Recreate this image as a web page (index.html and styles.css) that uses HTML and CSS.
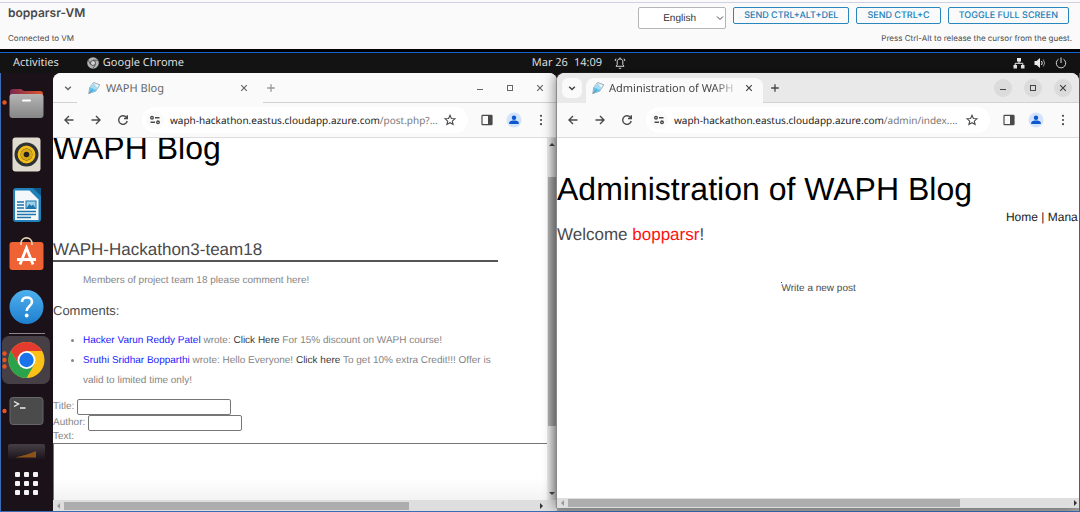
FILE: index.html
```html
<!DOCTYPE html>
<html lang="en">
<head>
<meta charset="utf-8">
<title>bopparsr-VM</title>
<link rel="stylesheet" href="styles.css">
</head>
<body>
<svg class="defs" aria-hidden="true">
  <defs>
    <linearGradient id="folder-back"><stop offset="0" stop-color="#7a2850"/><stop offset="1" stop-color="#e2562b"/></linearGradient>
    <linearGradient id="folder-front" x2="0" y2="1"><stop offset="0" stop-color="#b5b5b5"/><stop offset="1" stop-color="#868686"/></linearGradient>
    <linearGradient id="help-fill" x2="0" y2="1"><stop offset="0" stop-color="#4fb0ee"/><stop offset="1" stop-color="#1e7fcf"/></linearGradient>
    <linearGradient id="tile-fade" x2="0" y2="1"><stop offset="0" stop-color="#453f45"/><stop offset="1" stop-color="#1b1119"/></linearGradient>
  </defs>
  <symbol id="i-down" viewBox="0 0 10 10"><path d="M2.200 3.800l2.800 2.700L7.800 3.800" fill="none" stroke="currentColor" stroke-width="1.500"/></symbol>
  <symbol id="i-x" viewBox="0 0 10 10"><path d="M2.200 2.200l5.600 5.600M7.800 2.200L2.200 7.800" fill="none" stroke="currentColor" stroke-width="1.200"/></symbol>
  <symbol id="i-min" viewBox="0 0 10 10"><path d="M2 6.500h6" stroke="currentColor"/></symbol>
  <symbol id="i-max" viewBox="0 0 10 10"><rect x="2.500" y="2.500" width="5" height="5" fill="none" stroke="currentColor"/></symbol>
  <symbol id="i-plus" viewBox="0 0 10 10"><path d="M5 1.200v7.600M1.200 5h7.600" stroke="currentColor" stroke-width="1.300"/></symbol>
  <symbol id="i-back" viewBox="0 0 12 12"><path d="M10.500 6H2M6 2L2 6l4 4" fill="none" stroke="currentColor" stroke-width="1.400"/></symbol>
  <symbol id="i-fwd" viewBox="0 0 12 12"><path d="M1.500 6H10M6 2l4 4-4 4" fill="none" stroke="currentColor" stroke-width="1.400"/></symbol>
  <symbol id="i-reload" viewBox="0 0 12 12"><path d="M10.200 7A4.300 4.300 0 1 1 9.300 3.300L10 4.200M10.300 1.200v3.300H7" fill="none" stroke="currentColor" stroke-width="1.400"/></symbol>
  <symbol id="i-tune" viewBox="0 0 12 12"><g fill="none" stroke="currentColor" stroke-width="1.400"><circle cx="3" cy="3.700" r="1.300"/><path d="M6 3.700h4.500M1.500 8.300H6"/><circle cx="9" cy="8.300" r="1.300"/></g></symbol>
  <symbol id="i-star" viewBox="0 0 12 12"><path d="M6 1.300l1.400 3.200 3.500.3-2.600 2.300.8 3.400L6 8.700l-3.100 1.800.8-3.400L1.100 4.800l3.500-.3z" fill="none" stroke="currentColor" stroke-width="1.100"/></symbol>
  <symbol id="i-panel" viewBox="0 0 12 12"><rect x="1" y="1.300" width="10" height="9.400" rx=".6" fill="none" stroke="currentColor" stroke-width="1.200"/><path d="M7 1h4v10H7z" fill="currentColor"/></symbol>
  <symbol id="i-user" viewBox="0 0 16 16"><circle cx="8" cy="8" r="7.500" fill="#d3e3fd"/><circle cx="8" cy="5.700" r="2.200" fill="#0b57d0"/><path d="M3.200 12V11c0-1.900 3-2.400 4.800-2.400s4.800.5 4.800 2.400v1z" fill="#0b57d0"/></symbol>
  <symbol id="i-dots" viewBox="0 0 12 12"><g fill="currentColor"><circle cx="6" cy="1.800" r="1.100"/><circle cx="6" cy="6" r="1.100"/><circle cx="6" cy="10.200" r="1.100"/></g></symbol>
  <symbol id="i-pen" viewBox="0 0 14 14"><path d="M6.500 1.500l6.300 2.300-4 6.200L1.800 12.500l.9-6z" fill="#eef6fa" stroke="#8299a6" stroke-width=".8"/><path d="M3.200 6l6.300 2.700-1.100 1.700-5.900 1.300z" fill="#63c4ef"/><path d="M6.700 2L3.200 6l6.300 2.700 1-1.600z" fill="#a9daf2"/><path d="M1.800 12.500L5.500 9" stroke="#51718a" stroke-width=".8"/></symbol>
</svg>

<header class="console">
  <div class="console-name">
    <h1 class="vm-name">bopparsr-VM</h1>
    <p class="status">Connected to VM</p>
  </div>
  <div class="console-side">
    <div class="console-actions">
      <span class="select-box"><select class="language" aria-label="Keyboard language"><option>English</option></select><svg class="select-arrow" viewBox="0 0 10 10"><path d="M2 3.500l3 3 3-3" fill="none" stroke="#444"/></svg></span>
      <button class="action">SEND CTRL+ALT+DEL</button>
      <button class="action">SEND CTRL+C</button>
      <button class="action">TOGGLE FULL SCREEN</button>
    </div>
    <p class="hint">Press Ctrl-Alt to release the cursor from the guest.</p>
  </div>
</header>

<main class="screen">
  <div class="topbar">
    <div class="top-left">
      <button class="top-button">Activities</button>
      <button class="top-button app-name"><svg class="icon12" viewBox="0 0 12 12"><circle cx="6" cy="6" r="5.800" fill="#b5b5b5"/><path d="M6 3.200h5.200M3.600 7.400L1 3M8.400 7.400L5.800 11.800" stroke="#5b5b5b"/><circle cx="6" cy="6" r="2.800" fill="#494949"/><circle cx="6" cy="6" r="2" fill="#d5d5d5"/></svg>Google Chrome</button>
    </div>
    <div class="clock"><span>Mar 26</span><span>14:09</span><svg class="icon12 bell" viewBox="0 0 12 12"><path d="M2 9.300h8L8.800 7.700V4.200C8.800 1.200 3.200 1.200 3.200 4.200v3.500zM4.800 11.300h2.400M6 .5v1.500M1 4l1-2.300M11 4l-1-2.300" fill="none" stroke="#ddd"/></svg></div>
    <div class="tray">
      <svg class="icon12" viewBox="0 0 12 12"><path d="M4 1h4v3.500H4zM.5 8H4v3.500H.5zM8 8h3.500v3.500H8z" fill="#eee"/><path d="M6 4v2.300M2.200 8.500V6.300h7.600v2.200" fill="none" stroke="#eee"/></svg>
      <svg class="icon12" viewBox="0 0 12 12"><path d="M.5 4h2L6 1v10L2.500 8h-2z" fill="#eee"/><path d="M7.500 4q1.500 2 0 4" fill="none" stroke="#eee"/><path d="M9.300 2.500q2.700 3.500 0 7" fill="none" stroke="#999"/></svg>
      <svg class="icon12" viewBox="0 0 12 12"><path d="M3.500 2.200a4.700 4.700 0 1 0 5 0M6 .5V6" fill="none" stroke="#ddd"/></svg>
    </div>
  </div>

  <div class="desktop">
    <nav class="dock" aria-label="Dock">
      <svg class="app" viewBox="0 0 51 51"><circle cx="3.500" cy="24.500" r="2.200" fill="#e95420"/><path d="M9 14q0-3 3-3h8l3 2h16q3 0 3 3v16H9z" fill="url(#folder-back)"/><rect x="8.500" y="16" width="34" height="24" rx="3" fill="url(#folder-front)"/><rect x="21" y="21.500" width="9" height="2" rx="1" fill="#fff"/></svg>
      <svg class="app" viewBox="0 0 51 51"><rect x="11.500" y="8.500" width="28" height="34" rx="3" fill="#dfdccf"/><circle cx="25.500" cy="25.500" r="12" fill="#2e3235"/><circle cx="25.500" cy="25.500" r="7.400" fill="none" stroke="#f0bd1c" stroke-width="3"/><circle cx="25.500" cy="25.500" r="5.800" fill="#d9a614"/><circle cx="25.500" cy="25.500" r="2.800" fill="#222"/></svg>
      <svg class="app" viewBox="0 0 51 51"><path d="M14 8h19l7 7v24q0 3-3 3H15q-3 0-3-3V11q0-3 3-3z" fill="#2081b8"/><path d="M32 8h8v8z" fill="#0e5a8a"/><path d="M14 10.500h14.500l9 9V40H14z" fill="#f4f8fa"/><path d="M16 22h7M16 25h7M16 28h7M16 31.500h19M16 34.500h19M16 37.500h14" stroke="#1d75aa" stroke-width="1.400"/><rect x="25" y="21" width="10" height="7.500" fill="#9fd0ea" stroke="#1d75aa"/><path d="M25.500 28l3-4 2 2 1.500-1.500 2.500 3.500z" fill="#1d75aa"/></svg>
      <svg class="app" viewBox="0 0 51 51"><rect x="8.500" y="11" width="34" height="28" rx="3" fill="#ee6233"/><path d="M20 14v-1.500c0-7.500 11-7.500 11 0V14" fill="none" stroke="#e6d5b6" stroke-width="1.600"/><path d="M19 33.500L25.500 17l6.500 16.500M16 28.500h19" fill="none" stroke="#fff" stroke-width="2.800"/></svg>
      <svg class="app" viewBox="0 0 51 51"><circle cx="25.500" cy="25" r="17" fill="url(#help-fill)"/><path d="M21 20c0-6 10-6 10 0 0 4-5.300 4-5.300 9" fill="none" stroke="#fff" stroke-width="2.600"/><circle cx="25.700" cy="33.500" r="1.900" fill="#fff"/></svg>
      <div class="dock-line"></div>
      <svg class="app" viewBox="0 0 51 51"><rect x="1" y="2" width="48" height="48" rx="7" fill="#463f46"/><g fill="#e95420"><circle cx="3.500" cy="19.500" r="2.200"/><circle cx="3.500" cy="26" r="2.200"/><circle cx="3.500" cy="32.500" r="2.200"/></g><circle cx="25.500" cy="26" r="18" fill="#fbc116"/><path d="M9.900 17A18 18 0 0 1 41.100 17H25.500L17.700 30.500z" fill="#e33b2e"/><path d="M9.900 17a18 18 0 0 0 15.600 27l7.800-13.500H17.700z" fill="#2ba24c"/><circle cx="25.500" cy="26" r="9" fill="#fff"/><circle cx="25.500" cy="26" r="7.200" fill="#1a73e8"/></svg>
      <svg class="app" viewBox="0 0 51 51"><circle cx="3.500" cy="26" r="2.200" fill="#e95420"/><rect x="9" y="12.500" width="33" height="27" rx="3" fill="#4b4b4b" stroke="#676767"/><path d="M13 16.500l4.500 2.500-4.500 2.500M19 23h5.500" fill="none" stroke="#eee" stroke-width="1.400"/></svg>
      <svg class="tile" viewBox="0 0 51 16"><rect x="7" y="0" width="37" height="16" rx="2" fill="url(#tile-fade)"/><path d="M14 13.500Q27 10.500 35 7v6.500z" fill="#8c5219"/></svg>
      <svg class="grid-icon" viewBox="0 0 51 24"><g fill="#f3f3f3"><rect x="14" width="5" height="5" rx="1"/><rect x="23" width="5" height="5" rx="1"/><rect x="32" width="5" height="5" rx="1"/><rect x="14" y="9" width="5" height="5" rx="1"/><rect x="23" y="9" width="5" height="5" rx="1"/><rect x="32" y="9" width="5" height="5" rx="1"/><rect x="14" y="18" width="5" height="5" rx="1"/><rect x="23" y="18" width="5" height="5" rx="1"/><rect x="32" y="18" width="5" height="5" rx="1"/></g></svg>
    </nav>

    <section class="window window-blog">
      <div class="tabstrip">
        <button class="tab-search" aria-label="Search tabs"><svg class="icon10"><use href="#i-down"/></svg></button>
        <div class="tab"><svg class="icon14"><use href="#i-pen"/></svg><span class="tab-title">WAPH Blog</span><button class="plain" aria-label="Close tab"><svg class="icon10"><use href="#i-x"/></svg></button></div>
        <div class="strip-rest">
          <button class="plain" aria-label="New tab"><svg class="icon10"><use href="#i-plus"/></svg></button>
          <div class="controls"><button class="control" aria-label="Minimize"><svg class="icon10"><use href="#i-min"/></svg></button><button class="control" aria-label="Maximize"><svg class="icon10"><use href="#i-max"/></svg></button><button class="control" aria-label="Close"><svg class="icon10"><use href="#i-x"/></svg></button></div>
        </div>
      </div>
      <div class="toolbar">
        <div class="nav-buttons"><button class="plain" aria-label="Back"><svg class="icon12"><use href="#i-back"/></svg></button><button class="plain" aria-label="Forward"><svg class="icon12"><use href="#i-fwd"/></svg></button><button class="plain" aria-label="Reload"><svg class="icon12"><use href="#i-reload"/></svg></button></div>
        <div class="address"><span class="site-info"><svg class="icon12"><use href="#i-tune"/></svg></span><span class="url">waph-hackathon.eastus.cloudapp.azure.com<span class="path">/post.php?...</span></span><button class="plain" aria-label="Bookmark"><svg class="icon12"><use href="#i-star"/></svg></button></div>
        <div class="tools"><button class="plain" aria-label="Side panel"><svg class="icon12"><use href="#i-panel"/></svg></button><button class="plain" aria-label="Profile"><svg class="icon16"><use href="#i-user"/></svg></button><button class="plain" aria-label="Menu"><svg class="icon12"><use href="#i-dots"/></svg></button></div>
      </div>
      <div class="view">
        <article class="page page-blog">
          <h2 class="page-title">WAPH Blog</h2>
          <h3 class="post-title">WAPH-Hackathon3-team18</h3>
          <p class="post-text">Members of project team 18 please comment here!</p>
          <h4 class="comments-title">Comments:</h4>
          <ul class="comments">
            <li><a class="author" href="#">Hacker Varun Reddy Patel</a> wrote: <a class="link" href="#">Click Here</a> For 15% discount on WAPH course!</li>
            <li><a class="author" href="#">Sruthi Sridhar Bopparthi</a> wrote: Hello Everyone! <a class="link" href="#">Click here</a> To get 10% extra Credit!!! Offer is valid to limited time only!</li>
          </ul>
          <form class="comment-form">
            <div class="field"><label for="title">Title:</label><input id="title" type="text"></div>
            <div class="field"><label for="author">Author:</label><input id="author" type="text"></div>
            <label class="text-label" for="text">Text:</label>
            <textarea id="text"></textarea>
          </form>
        </article>
        <div class="vbar"><span class="arrow-up"></span><span class="vthumb"></span><span class="arrow-down"></span></div>
      </div>
      <div class="hbar"><span class="arrow-left"></span><span class="htrack"><span class="hthumb"></span></span><span class="arrow-right"></span></div>
    </section>

    <section class="window window-admin">
      <div class="tabstrip">
        <button class="tab-search" aria-label="Search tabs"><svg class="icon10"><use href="#i-down"/></svg></button>
        <div class="tab"><svg class="icon14"><use href="#i-pen"/></svg><span class="tab-title">Administration of WAPH</span><button class="plain" aria-label="Close tab"><svg class="icon10"><use href="#i-x"/></svg></button></div>
        <div class="strip-rest">
          <button class="plain" aria-label="New tab"><svg class="icon10"><use href="#i-plus"/></svg></button>
          <div class="controls"><button class="control" aria-label="Minimize"><svg class="icon10"><use href="#i-min"/></svg></button><button class="control" aria-label="Maximize"><svg class="icon10"><use href="#i-max"/></svg></button><button class="control" aria-label="Close"><svg class="icon10"><use href="#i-x"/></svg></button></div>
        </div>
      </div>
      <div class="toolbar">
        <div class="nav-buttons"><button class="plain" aria-label="Back"><svg class="icon12"><use href="#i-back"/></svg></button><button class="plain" aria-label="Forward"><svg class="icon12"><use href="#i-fwd"/></svg></button><button class="plain" aria-label="Reload"><svg class="icon12"><use href="#i-reload"/></svg></button></div>
        <div class="address"><span class="site-info"><svg class="icon12"><use href="#i-tune"/></svg></span><span class="url">waph-hackathon.eastus.cloudapp.azure.com<span class="path">/admin/index....</span></span><button class="plain" aria-label="Bookmark"><svg class="icon12"><use href="#i-star"/></svg></button></div>
        <div class="tools"><button class="plain" aria-label="Side panel"><svg class="icon12"><use href="#i-panel"/></svg></button><button class="plain" aria-label="Profile"><svg class="icon16"><use href="#i-user"/></svg></button><button class="plain" aria-label="Menu"><svg class="icon12"><use href="#i-dots"/></svg></button></div>
      </div>
      <div class="view">
        <article class="page page-admin">
          <h2 class="page-title">Administration of WAPH Blog</h2>
          <nav class="menu"><a href="#">Home</a> | <a href="#">Mana</a></nav>
          <h3 class="welcome">Welcome <span class="user">bopparsr</span>!</h3>
          <a class="new-post" href="#">Write a new post</a>
        </article>
      </div>
      <div class="hbar"><span class="arrow-left"></span><span class="htrack"><span class="hthumb"></span></span><span class="arrow-right"></span></div>
    </section>
  </div>
</main>
</body>
</html>
```
FILE: styles.css
```css
* { box-sizing: border-box; }

body {
  margin: 0;
  min-height: 100vh;
  display: flex;
  flex-direction: column;
  font-family: "Noto Sans", "Open Sans", sans-serif;
  text-rendering: geometricPrecision;
  background: #fafafa;
}

h1, h2, h3, h4, p, ul { margin: 0; font-weight: 400; }
button, input, select, textarea { font: inherit; color: inherit; margin: 0; text-rendering: inherit; }
a { color: inherit; text-decoration: none; }
svg { display: block; flex: none; }

.defs { position: absolute; width: 0; height: 0; }
.icon10 { width: 10px; height: 10px; }
.icon12 { width: 12px; height: 12px; }
.icon14 { width: 14px; height: 14px; }
.icon16 { width: 16px; height: 16px; }

.plain {
  display: block;
  flex: none;
  padding: 0;
  border: 0;
  background: none;
}

/* Console header */
.console {
  display: flex;
  justify-content: space-between;
  height: 47px;
  padding: 4px 8px 0;
  border-top: 1px solid #cfd0e2;
  margin-top: 2px;
  font-family: Inter, sans-serif;
  color: #4a4a4a;
}
.vm-name { font-size: 12px; line-height: 12px; font-weight: 600; }
.status, .hint { font-size: 8px; line-height: 12px; }
.status { margin-top: 13px; }
.console-side { display: flex; flex-direction: column; align-items: flex-end; gap: 3px; }
.console-actions { display: flex; align-items: flex-start; gap: 7px; padding-right: 3px; }
.select-box { position: relative; display: block; }
.language {
  display: block;
  appearance: none;
  width: 88px;
  height: 22px;
  padding: 0 0 0 24px;
  border: 1px solid #b5b5b5;
  border-radius: 2px;
  background: #fff;
  font: 10px "Liberation Sans", Arial, sans-serif;
  color: #333;
}
.select-arrow { position: absolute; right: 1px; top: 6px; width: 10px; height: 10px; }
.action {
  height: 17px;
  padding: 0 10px;
  border: 1px solid #2a87bd;
  border-radius: 2px;
  background: #fafafa;
  color: #2080b8;
  font-size: 9px;
  line-height: 14px;
  font-weight: 500;
}

/* Remote screen */
.screen {
  flex: 1;
  display: flex;
  flex-direction: column;
  border: 1px solid #3a6cb5;
  border-top: 0;
  background: #1b1119;
}
.topbar {
  display: grid;
  grid-template-columns: 520fr auto 442fr;
  align-items: center;
  height: 24px;
  margin: 0 -1px;
  padding: 0 13px;
  border-top: 3px solid #000;
  box-shadow: inset 0 1px #1264d6;
  background: #131313;
  color: #ddd;
  font-size: 11px;
  line-height: 14px;
}
.top-left, .clock, .tray, .app-name { display: flex; align-items: center; }
.top-left { gap: 28px; }
.top-button { padding: 0; border: 0; background: none; line-height: 14px; }
.app-name { gap: 4px; }
.clock { gap: 6px; }
.bell { margin-left: 6px; }
.tray { justify-content: flex-end; gap: 9px; }

.desktop {
  flex: 1;
  display: grid;
  grid-template-columns: 52px minmax(0, 504fr) minmax(0, 522fr);
}

/* Dock */
.dock { display: flex; flex-direction: column; padding-top: 5px; }
.app { width: 51px; height: 51px; }
.dock-line { height: 1px; margin: 0 8px; background: #8b858a; }
.tile { width: 51px; height: 16px; margin-top: 8px; }
.grid-icon { width: 51px; height: 24px; margin-top: 12px; }

/* Browser windows */
.window {
  display: flex;
  flex-direction: column;
  min-width: 0;
  border-radius: 8px 8px 0 0;
  background: #fff;
  color: #4a4a4a;
  overflow: hidden;
}
.window-admin {
  margin-bottom: 3px;
  box-shadow: -1px 0 1px #888, -3px 0 12px rgba(0, 0, 0, .4), 0 3px 0 #a5a5a5;
  z-index: 1;
}
.tabstrip { display: flex; height: 30px; background: #fafafa; color: #666; }
.tab-search {
  display: grid;
  place-items: center;
  width: 24px;
  height: 30px;
  padding: 0 0 0 6px;
  border: 0;
  border-bottom: 1px solid #d2d2d2;
  background: none;
}
.tab {
  display: flex;
  align-items: center;
  gap: 5px;
  width: 186px;
  padding: 0 14px 0 10px;
  font-size: 11px;
}
.tab-title { flex: 1; overflow: hidden; white-space: nowrap; }
.strip-rest {
  flex: 1;
  display: flex;
  align-items: center;
  justify-content: space-between;
  padding: 0 8px 0 3px;
  border-bottom: 1px solid #d2d2d2;
}
.window-blog .strip-rest > .plain { color: #999; }
.controls { display: flex; gap: 12px; }
.control {
  display: grid;
  place-items: center;
  width: 18px;
  height: 18px;
  padding: 0;
  border: 0;
  border-radius: 9px;
  background: none;
}
.window-admin .tabstrip { background: #e9e9e9; color: #444; }
.window-admin .tab-search {
  width: 20px;
  height: 20px;
  margin: 5px 4px 0 5px;
  border: 0;
  border-radius: 6px;
  padding: 0;
  background: #fafafa;
}
.window-admin .tab {
  gap: 4px;
  width: 177px;
  margin-top: 5px;
  padding: 0 9px 5px 5px;
  border-radius: 8px 8px 0 0;
  background: #fafafa;
}
.window-admin .tab-title { mask-image: linear-gradient(to right, #000 80%, transparent 100%); }
.window-admin .strip-rest { padding: 0 7px; }
.window-admin .control { background: #dbdbdb; }

.toolbar {
  display: flex;
  align-items: center;
  gap: 13px;
  height: 35px;
  padding: 0 10px;
  border-bottom: 1px solid #dcdcdc;
  background: #fafafa;
}
.nav-buttons, .tools { display: flex; align-items: center; gap: 15px; }
.tools { gap: 13px; }
.address {
  flex: 1;
  display: flex;
  align-items: center;
  gap: 6px;
  min-width: 0;
  height: 26px;
  padding: 0 12px 0 4px;
  border-radius: 13px;
  background: #fff;
}
.site-info {
  display: grid;
  place-items: center;
  flex: none;
  width: 18px;
  height: 18px;
  border-radius: 9px;
  background: #fafafa;
}
.url { flex: 1; overflow: hidden; white-space: nowrap; font-size: 10px; color: #222; }
.path { color: #777; }

/* Page area and scroll bars */
.view { flex: 1; display: flex; min-height: 0; }
.page {
  flex: 1;
  min-width: 0;
  display: flex;
  flex-direction: column;
  overflow: hidden;
  font: 10px/20px "Liberation Sans", Arial, sans-serif;
  color: #858585;
}
.vbar {
  display: flex;
  flex-direction: column;
  align-items: center;
  width: 10px;
  padding: 5px 0;
  background: linear-gradient(to right, #ececec, #bdbdbd);
}
.vthumb {
  height: 249px;
  width: 8px;
  margin: 31px 0 auto;
  background: linear-gradient(to right, #b0b0b0, #8e8e8e);
}
.arrow-up, .arrow-down, .arrow-left, .arrow-right { flex: none; border: 3px solid transparent; }
.arrow-up { border-top: 0; border-bottom-color: #444; }
.arrow-down { border-bottom: 0; border-top-color: #444; }
.arrow-left { border-left: 0; border-right-color: #999; }
.arrow-right { border-right: 0; border-left-color: #333; }
.hbar {
  display: flex;
  align-items: center;
  gap: 4px;
  height: 11px;
  padding: 0 14px 0 4px;
  background: #dedede;
}
.htrack { flex: 1; }
.hthumb { display: block; width: 73%; height: 8px; background: #adadad; }
.window-admin .hbar { height: 10px; padding: 0 2px 0 4px; }
.window-admin .hthumb { width: 78%; }

.page-title { font-size: 32px; line-height: 40px; color: #000; white-space: nowrap; }

/* Blog page, scrolled down a little */
.page-blog .page-title { margin-top: -10px; }
.page-blog { background: linear-gradient(to bottom, #fff 94%, #f3f3f3); }
.post-title {
  width: 90%;
  margin-top: 72px;
  border-bottom: 2px solid #555;
  font-size: 17px;
  line-height: 20px;
  color: #4a4a4a;
}
.post-text { margin: 9px 30px 10px; }
.comments-title { font-size: 13px; color: #4a4a4a; }
.comments { width: 90%; margin: 10px 0 8px; padding-left: 30px; }
.author { color: #1a1aff; }
.link { color: #3a3a3a; }
.comment-form { flex: 1; display: flex; flex-direction: column; line-height: 12px; }
.field { display: flex; align-items: center; gap: 3px; }
.field input {
  width: 154px;
  height: 16px;
  padding: 0 2px;
  border: 1px solid #767676;
  border-radius: 2px;
  background: #fff;
}
.comment-form textarea {
  flex: 1;
  min-height: 56px;
  border: 1px solid #767676;
  border-width: 1px 0 0 1px;
  background: transparent;
  resize: none;
}

/* Administration page */
.page-admin { padding-top: 31px; }
.menu {
  margin: 1px 0 1px 86%;
  white-space: pre;
  font-size: 12px;
  line-height: 14px;
  color: #222;
}
.welcome { font-size: 17px; line-height: 20px; color: #4a4a4a; }
.user { color: #f11; }
.new-post {
  margin: 37px 0 0 43%;
  line-height: 14px;
  color: #4a4a4a;
}
.new-post::before {
  content: "";
  display: block;
  width: 1px;
  height: 1px;
  margin-bottom: -1px;
  background: #333;
}
```
